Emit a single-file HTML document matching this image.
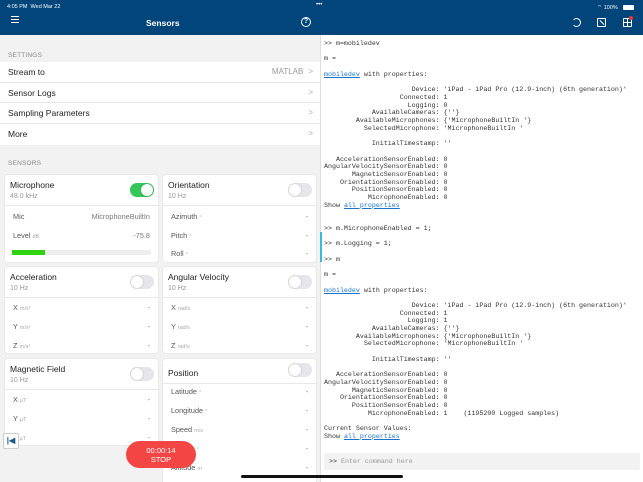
<!DOCTYPE html>
<html style="width:643px;height:482px;overflow:hidden"><head><meta charset="utf-8"><style>
*{margin:0;padding:0;box-sizing:border-box}
body{width:643px;height:482px;overflow:hidden;position:relative;font-family:"Liberation Sans",sans-serif;background:#fff}
.a{position:absolute}
#hdr{left:0;top:0;width:643px;height:35px;background:#01457a;color:#fff}
#left{left:0;top:35px;width:321px;height:447px;background:#f2f2f2;overflow:hidden}
.lbl{font-size:6.5px;color:#888;letter-spacing:.2px}
.row{left:0;width:321px;height:20.7px;background:#fff;font-size:8.5px;color:#222;padding-left:8px;line-height:20.7px;border-bottom:1px solid #e6e6e6}
.chev{position:absolute;right:8px;top:0;color:#aaa;font-size:8px}
.card{background:#fff;border-radius:3px;box-shadow:0 0 1.5px rgba(0,0,0,.15)}
.ct{position:absolute;left:5px;top:5px;font-size:8.5px;color:#222}
.cs{position:absolute;left:5px;top:18px;font-size:7px;color:#999}
.hl{position:absolute;left:0;right:0;top:30px;height:1px;background:#e8e8e8}
.tg{position:absolute;right:4px;top:8px;width:24px;height:14px;border-radius:7px;background:#e5e5ea}
.tg::after{content:"";position:absolute;left:1px;top:1px;width:12px;height:12px;border-radius:6px;background:#fff;box-shadow:0 0 1.5px rgba(0,0,0,.3)}
.tg.on{background:#34c759}.tg.on::after{left:11px}
.r{position:absolute;left:8px;right:8px;font-size:7.3px;color:#555}
.r b{font-weight:normal;font-size:5.5px;color:#aaa}
.r i{font-style:normal;position:absolute;right:0;top:0;color:#777}
#con{left:322px;top:35px;width:321px;height:447px;overflow:hidden;font-family:"Liberation Mono","DejaVu Sans Mono",monospace;font-size:6.65px;line-height:7.7px;color:#333;white-space:pre}
#con u{color:#1a73c8}
</style></head><body>
<div id="hdr" class="a">
 <div class="a" style="left:7px;top:4px;font-size:5.5px">4:05 PM &nbsp;Wed Mar 22</div>
 <div class="a" style="left:316px;top:2px;font-size:6px">•••</div>
 <div class="a" style="left:597px;top:4px;font-size:5.5px">⌔ 100%</div>
 <div class="a" style="left:623px;top:5px;width:11px;height:5px;background:#fff;border-radius:1px"></div>
 <div class="a" style="left:11px;top:19px;width:8px;height:1.2px;background:#fff;box-shadow:0 -3px 0 #fff,0 3px 0 #fff"></div>
 <div class="a" style="left:146px;top:18px;font-size:8.5px;font-weight:bold">Sensors</div>
 <div class="a" style="left:301px;top:17px;width:10px;height:10px;border:1.2px solid #fff;border-radius:50%;font-size:7px;text-align:center;line-height:8px;font-weight:bold">?</div>
 <div class="a" style="left:572px;top:18px;width:9px;height:9px;border:1.3px solid #fff;border-left-color:transparent;border-radius:50%"></div>
 <div class="a" style="left:597px;top:18px;width:9px;height:9px;border:1.3px solid #fff;border-radius:1px"><div class="a" style="left:1px;top:3px;width:6px;height:1px;background:#fff;transform:rotate(45deg)"></div></div>
 <div class="a" style="left:623px;top:18px;width:9px;height:9px;border:1.3px solid #fff;border-radius:1px"><div class="a" style="left:2.5px;top:-1px;width:1.3px;height:9px;background:#fff"></div><div class="a" style="left:-1px;top:2.5px;width:9px;height:1.3px;background:#fff"></div></div>
 <div class="a" style="left:629px;top:16px;width:4px;height:4px;border-radius:2px;background:#e53935"></div>
</div>
<div id="left" class="a">
 <div class="a lbl" style="left:8px;top:17px">SETTINGS</div>
 <div class="a row" style="top:27px">Stream to<span class="chev"><span style="font-size:8px;color:#999;margin-right:5px">MATLAB</span>&gt;</span></div>
 <div class="a row" style="top:47.7px">Sensor Logs<span class="chev">&gt;</span></div>
 <div class="a row" style="top:68.4px">Sampling Parameters<span class="chev">&gt;</span></div>
 <div class="a row" style="top:89.1px;border:none">More<span class="chev">&gt;</span></div>
 <div class="a lbl" style="left:8px;top:125px">SENSORS</div>
 <div class="a card" style="left:5px;top:140px;width:153px;height:87px">
  <div class="ct">Microphone</div><div class="cs">48.0 kHz</div><div class="tg on"></div><div class="hl"></div>
  <div class="r" style="top:37px">Mic<i>MicrophoneBuiltIn</i></div>
  <div class="r" style="top:56px">Level <b>dB</b><i>-75.8</i></div>
  <div class="a" style="left:7px;top:75px;width:139px;height:5px;background:#eee"><div style="width:33px;height:5px;background:#2fd311"></div></div>
 </div>
 <div class="a card" style="left:163px;top:140px;width:153px;height:87px">
  <div class="ct">Orientation</div><div class="cs">10 Hz</div><div class="tg"></div><div class="hl"></div>
  <div class="r" style="top:37px">Azimuth <b>°</b><i>-</i></div>
  <div class="r" style="top:56px">Pitch <b>°</b><i>-</i></div>
  <div class="r" style="top:74px">Roll <b>°</b><i>-</i></div>
 </div>
 <div class="a card" style="left:5px;top:232px;width:153px;height:86px">
  <div class="ct">Acceleration</div><div class="cs">10 Hz</div><div class="tg"></div><div class="hl"></div>
  <div class="r" style="top:36px">X <b>m/s²</b><i>-</i></div>
  <div class="r" style="top:55px">Y <b>m/s²</b><i>-</i></div>
  <div class="r" style="top:74px">Z <b>m/s²</b><i>-</i></div>
 </div>
 <div class="a card" style="left:163px;top:232px;width:153px;height:86px">
  <div class="ct">Angular Velocity</div><div class="cs">10 Hz</div><div class="tg"></div><div class="hl"></div>
  <div class="r" style="top:36px">X <b>rad/s</b><i>-</i></div>
  <div class="r" style="top:55px">Y <b>rad/s</b><i>-</i></div>
  <div class="r" style="top:74px">Z <b>rad/s</b><i>-</i></div>
 </div>
 <div class="a card" style="left:5px;top:324px;width:153px;height:86px">
  <div class="ct">Magnetic Field</div><div class="cs">10 Hz</div><div class="tg"></div><div class="hl"></div>
  <div class="r" style="top:36px">X <b>µT</b><i>-</i></div>
  <div class="r" style="top:55px">Y <b>µT</b><i>-</i></div>
  <div class="r" style="top:74px">Z <b>µT</b><i>-</i></div>
 </div>
 <div class="a card" style="left:163px;top:324px;width:153px;height:130px">
  <div class="ct" style="top:9px">Position</div><div class="tg" style="top:4px"></div><div class="hl" style="top:24px"></div>
  <div class="r" style="top:28px">Latitude <b>°</b><i>-</i></div>
  <div class="r" style="top:47px">Longitude <b>°</b><i>-</i></div>
  <div class="r" style="top:66px">Speed <b>m/s</b><i>-</i></div>
  <div class="r" style="top:85px">Course <b>°</b><i>-</i></div>
  <div class="r" style="top:104px">Altitude <b>m</b><i>-</i></div>
  <div class="r" style="top:122px">Horizontal Accuracy</div>
 </div>
 <div class="a" style="left:3px;top:398px;width:16px;height:16px;background:#fff;border:1px solid #ccc;border-radius:2px;color:#1b5a8a;font-size:8px;text-align:center;line-height:14px;font-weight:bold">|◀</div>
 <div class="a" style="left:126px;top:406px;width:70px;height:27px;border-radius:14px;background:#f44545;color:#fff;font-size:7.5px;text-align:center;line-height:9px;padding-top:4.5px">00:00:14<br>STOP</div>
</div>
<div class="a" style="left:320px;top:35px;width:1px;height:447px;background:#ddd"></div>
<div class="a" style="left:320px;top:232px;width:2px;height:30px;background:#3db8d6"></div>
<div id="con" class="a">
<div style="position:absolute;left:2px;top:5px">&gt;&gt; m=mobiledev

m =

<u>mobiledev</u> with properties:

                      Device: 'iPad - iPad Pro (12.9-inch) (6th generation)'
                   Connected: 1
                     Logging: 0
            AvailableCameras: {''}
        AvailableMicrophones: {'MicrophoneBuiltIn '}
          SelectedMicrophone: 'MicrophoneBuiltIn '

            InitialTimestamp: ''

   AccelerationSensorEnabled: 0
AngularVelocitySensorEnabled: 0
       MagneticSensorEnabled: 0
    OrientationSensorEnabled: 0
       PositionSensorEnabled: 0
           MicrophoneEnabled: 0
Show <u>all properties</u>


&gt;&gt; m.MicrophoneEnabled = 1;

&gt;&gt; m.Logging = 1;

&gt;&gt; m

m =

<u>mobiledev</u> with properties:

                      Device: 'iPad - iPad Pro (12.9-inch) (6th generation)'
                   Connected: 1
                     Logging: 1
            AvailableCameras: {''}
        AvailableMicrophones: {'MicrophoneBuiltIn '}
          SelectedMicrophone: 'MicrophoneBuiltIn '

            InitialTimestamp: ''

   AccelerationSensorEnabled: 0
AngularVelocitySensorEnabled: 0
       MagneticSensorEnabled: 0
    OrientationSensorEnabled: 0
       PositionSensorEnabled: 0
           MicrophoneEnabled: 1    (1195200 Logged samples)

Current Sensor Values:
Show <u>all properties</u></div>
<div style="position:absolute;left:2px;top:418px;width:316px;height:17px;background:#f2f2f2;border-radius:2px;padding:5px 0 0 5px;color:#999"><span style="color:#333">&gt;&gt;</span> Enter command here</div>
</div>
<div class="a" style="left:241px;top:475px;width:162px;height:3px;border-radius:2px;background:#111"></div>
</body></html>
